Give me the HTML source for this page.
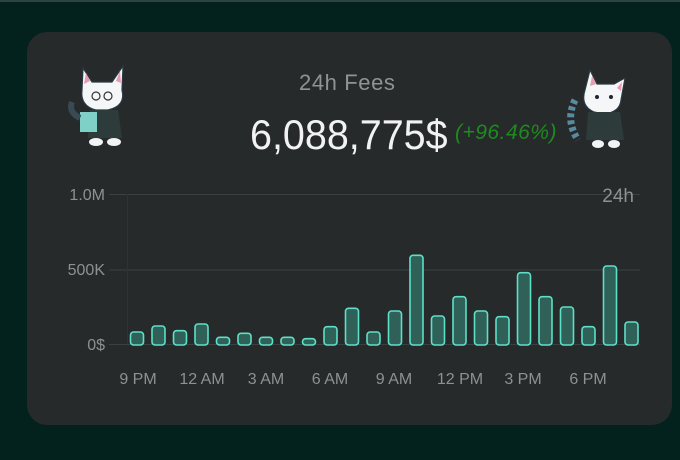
<!DOCTYPE html>
<html><head><meta charset="utf-8"><style>
*{margin:0;padding:0;box-sizing:border-box}
body{width:680px;height:460px;background:#03211d;position:relative;overflow:hidden;font-family:"Liberation Sans",sans-serif}
.top{position:absolute;left:0;top:0;width:680px;height:2px;background:#2c4541}
.card{position:absolute;left:27px;top:32px;width:645px;height:393px;background:#262a2a;border-radius:20px}
.t{position:absolute;white-space:nowrap;transform-origin:0 0}
</style></head><body>
<div class="top"></div>
<div class="card"></div>
<div class="t" style="left:299px;top:70px;font-size:22px;color:#8f9393;letter-spacing:0.6px">24h Fees</div>
<div class="t" style="left:250px;top:111px;font-size:42px;color:#f2f2f2;transform:scaleX(0.94)">6,088,775$</div>
<div class="t" style="left:455px;top:121px;font-size:21px;color:#1f8a1f;font-style:italic;letter-spacing:0.5px">(+96.46%)</div>
<svg width="680" height="460" style="position:absolute;left:0;top:0">
<g>
<path d="M83 68 L92 82 L112 82 L123 66 L122 90 Q126 106 108 110 L96 110 Q80 106 82 90 Z" fill="#f4f6f8" stroke="#2a3a44" stroke-width="1.2"/>
<path d="M86 73 L90 81 L84 84Z M120 71 L116 81 L121 83Z" fill="#e79ab0"/>
<circle cx="96" cy="96" r="4" fill="none" stroke="#333" stroke-width="1.2"/><circle cx="108" cy="96" r="4" fill="none" stroke="#333" stroke-width="1.2"/>
<path d="M90 110 L118 110 L122 138 L88 138Z" fill="#2e3b3b"/>
<rect x="80" y="112" width="17" height="20" fill="#7fd1c8"/>
<path d="M72 102 Q68 112 80 118" stroke="#3a4a55" stroke-width="6" fill="none"/>
<ellipse cx="96" cy="142" rx="7" ry="4" fill="#f1f3f5"/><ellipse cx="114" cy="142" rx="7" ry="4" fill="#f1f3f5"/>
</g>
<g>
<path d="M590 70 L597 84 L614 84 L625 78 L621 100 Q620 112 604 114 L594 112 Q580 106 585 90 Z" fill="#f4f6f8" stroke="#2a3a44" stroke-width="1.2"/>
<path d="M592 76 L596 84 L590 86Z M622 82 L617 88 L621 91Z" fill="#e79ab0"/>
<circle cx="597" cy="97" r="2" fill="#223"/><circle cx="611" cy="97" r="2" fill="#223"/>
<path d="M588 112 L620 112 L624 140 L586 140Z" fill="#2e3b3b"/>
<path d="M575 100 Q565 120 578 140" stroke="#5a8aa0" stroke-width="7" fill="none" stroke-dasharray="4 3"/>
<ellipse cx="598" cy="144" rx="6" ry="4" fill="#f1f3f5"/><ellipse cx="614" cy="144" rx="6" ry="4" fill="#f1f3f5"/>
</g>
<g stroke="#3b4040" stroke-width="1">
<line x1="109" y1="194.5" x2="640" y2="194.5"/>
<line x1="109" y1="270" x2="640" y2="270"/>
<line x1="109" y1="344.5" x2="640" y2="344.5"/>
<line x1="127.5" y1="194" x2="127.5" y2="344" stroke="#2e3333"/>
</g>
<g font-family="Liberation Sans" font-size="16" fill="#8d9191">
<text x="105" y="200" text-anchor="end">1.0M</text>
<text x="105" y="275" text-anchor="end">500K</text>
<text x="105" y="350" text-anchor="end">0$</text>
<text x="634" y="202" text-anchor="end" font-size="19">24h</text>
<g text-anchor="middle" font-size="16">
<text x="138" y="384">9 PM</text><text x="202" y="384">12 AM</text><text x="266" y="384">3 AM</text><text x="330" y="384">6 AM</text><text x="394" y="384">9 AM</text><text x="460" y="384">12 PM</text><text x="523" y="384">3 PM</text><text x="588" y="384">6 PM</text>
</g>
</g>
<g fill="#2f6158" stroke="#5ee0c8" stroke-width="1.6">
<rect x="130.5" y="332" width="13" height="13" rx="3"/>
<rect x="152" y="326" width="13" height="19" rx="3"/>
<rect x="173.5" y="330.7" width="13" height="14.3" rx="3"/>
<rect x="195" y="324" width="13" height="21" rx="3"/>
<rect x="216.5" y="337.3" width="13" height="7.7" rx="3"/>
<rect x="238" y="333.3" width="13" height="11.7" rx="3"/>
<rect x="259.5" y="337.3" width="13" height="7.7" rx="3"/>
<rect x="281" y="337.3" width="13" height="7.7" rx="3"/>
<rect x="302.5" y="338.7" width="13" height="6.3" rx="3"/>
<rect x="324" y="326.7" width="13" height="18.3" rx="3"/>
<rect x="345.5" y="308.3" width="13" height="36.7" rx="3"/>
<rect x="367" y="332" width="13" height="13" rx="3"/>
<rect x="388.5" y="311" width="13" height="34" rx="3"/>
<rect x="410" y="255.3" width="13" height="89.7" rx="3"/>
<rect x="431.5" y="316" width="13" height="29" rx="3"/>
<rect x="453" y="296.7" width="13" height="48.3" rx="3"/>
<rect x="474.5" y="311" width="13" height="34" rx="3"/>
<rect x="496" y="316.7" width="13" height="28.3" rx="3"/>
<rect x="517.5" y="272.7" width="13" height="72.3" rx="3"/>
<rect x="539" y="296.7" width="13" height="48.3" rx="3"/>
<rect x="560.5" y="307" width="13" height="38" rx="3"/>
<rect x="582" y="326.7" width="13" height="18.3" rx="3"/>
<rect x="603.5" y="266" width="13" height="79" rx="3"/>
<rect x="625" y="322" width="13" height="23" rx="3"/>
</g>
</svg>
</body></html>
